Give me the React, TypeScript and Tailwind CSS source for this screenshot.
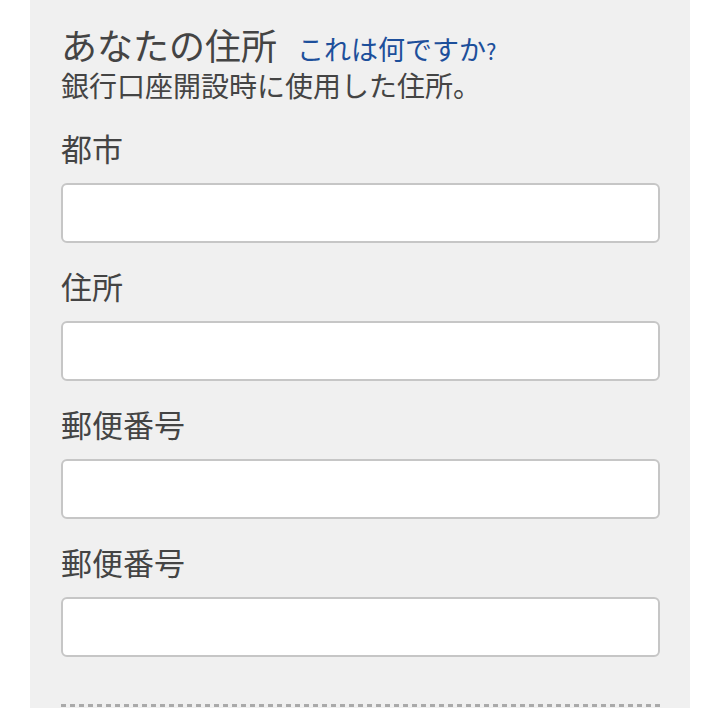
import React from "react";

const font = { fontFamily: '"Noto Sans CJK JP", "Noto Sans", sans-serif' };

function Field({ label }: { label: string }) {
  return (
    <div className="flex flex-col">
      <label className="mt-[25px] mb-[17px] h-[36px] text-[31px] leading-[36px] text-[#444444]">{label}</label>
      <input
        type="text"
        className="h-[60px] w-full rounded-[6px] border-2 border-[#c6c6c6] bg-white outline-none"
      />
    </div>
  );
}

export default function App() {
  return (
    <div className="h-[708px] w-[720px] overflow-hidden bg-white" style={font}>
      <div className="ml-[30px] h-full w-[660px] bg-[#f0f0f0] pl-[31px] pr-[30px] pt-[22px]">
        <div className="flex h-[44px] items-baseline">
          <h2 className="text-[36px] leading-[44px] font-normal text-[#444444]">あなたの住所</h2>
          <a className="ml-[20px] text-[27px] leading-[44px] text-[#1d4f9b]">
            これは何ですか<span className="text-[22px]">?</span>
          </a>
        </div>
        <p className="mt-px h-[36px] text-[28px] leading-[36px] text-[#444444]">銀行口座開設時に使用した住所。</p>
        <div className="h-[2px]" />
        <Field label="都市" />
        <Field label="住所" />
        <Field label="郵便番号" />
        <Field label="郵便番号" />
        <div className="mt-[47px] h-[3px] w-full bg-[repeating-linear-gradient(90deg,#aaaaaa_0px,#aaaaaa_5px,transparent_5px,transparent_9px)]" />
      </div>
    </div>
  );
}
